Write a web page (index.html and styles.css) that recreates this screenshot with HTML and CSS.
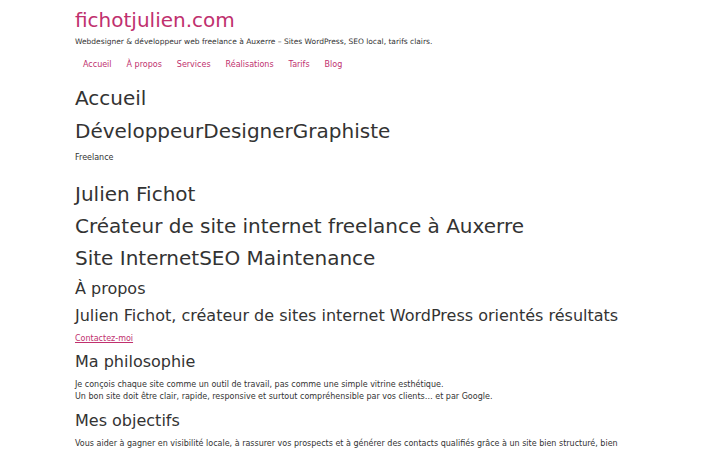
FILE: index.html
```html
<!DOCTYPE html>
<html lang="fr">
<head>
<meta charset="utf-8">
<title>fichotjulien.com</title>
<link rel="stylesheet" href="styles.css">
</head>
<body>
<div class="page">
  <header class="site-header">
    <div class="site-title">fichotjulien.com</div>
    <p class="tagline">Webdesigner &amp; développeur web freelance à Auxerre – Sites WordPress, SEO local, tarifs clairs.</p>
    <nav class="nav">
      <a href="#">Accueil</a>
      <a href="#">À propos</a>
      <a href="#">Services</a>
      <a href="#">Réalisations</a>
      <a href="#">Tarifs</a>
      <a href="#">Blog</a>
    </nav>
  </header>
  <main class="content">
    <h1 class="big first">Accueil</h1>
    <h2 class="big dev">DéveloppeurDesignerGraphiste</h2>
    <p class="small freelance">Freelance</p>
    <h1 class="big julien">Julien Fichot</h1>
    <h2 class="big">Créateur de site internet freelance à Auxerre</h2>
    <h2 class="big">Site InternetSEO Maintenance</h2>
    <h2 class="mid apropos">À propos</h2>
    <h3 class="mid sub">Julien Fichot, créateur de sites internet WordPress orientés résultats</h3>
    <p class="small contact"><a href="#">Contactez-moi</a></p>
    <h2 class="mid section">Ma philosophie</h2>
    <p class="small para">Je conçois chaque site comme un outil de travail, pas comme une simple vitrine esthétique.<br>Un bon site doit être clair, rapide, responsive et surtout compréhensible par vos clients… et par Google.</p>
    <h2 class="mid section2">Mes objectifs</h2>
    <p class="small para">Vous aider à gagner en visibilité locale, à rassurer vos prospects et à générer des contacts qualifiés grâce à un site bien structuré, bien pensé et bien référencé.</p>
  </main>
</div>
</body>
</html>
```

FILE: styles.css
```css
html, body {
  margin: 0;
  padding: 0;
  background: #ffffff;
}
body {
  font-family: "DejaVu Sans", "Liberation Sans", sans-serif;
  color: #333333;
}
.page {
  padding: 4px 95px 0 75px;
}
.site-title {
  font-size: 20px;
  line-height: 32px;
  color: #c0306e;
}
.tagline {
  margin: 0;
  font-size: 7.5px;
  line-height: 12px;
  color: #333333;
}
.nav {
  display: flex;
  gap: 15px;
  margin-top: 11px;
  padding-left: 8px;
}
.nav a {
  font-size: 8px;
  line-height: 12px;
  color: #c0306e;
  text-decoration: none;
}
.content {
  margin-top: 11px;
}
.big {
  margin: 0;
  font-size: 20px;
  font-weight: normal;
  line-height: 32px;
  color: #333333;
}
.mid {
  margin: 0;
  font-size: 16px;
  font-weight: normal;
  line-height: 26px;
  color: #333333;
}
.sub {
  margin-top: 1px;
}
.small {
  margin: 0;
  font-size: 8px;
  line-height: 12px;
  color: #333333;
}
.dev { margin-top: 1px; }
.freelance { margin-top: 5px; }
.julien { margin-top: 14px; }
.apropos { margin-top: 2px; }
.contact { margin-top: 4px; }
.contact a { color: #c0306e; text-decoration: underline; }
.section { margin-top: 4px; }
.para { margin-top: 4px; }
.section2 { margin-top: 5px; }
```
